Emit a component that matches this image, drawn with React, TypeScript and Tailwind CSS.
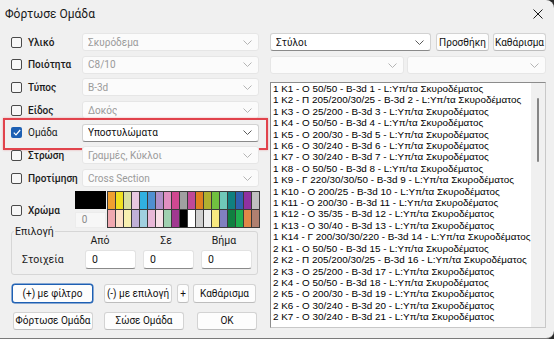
import React from 'react';

const topColors = [
  '#f0a030', '#f0e020', '#d8e0a0', '#e8c8e0', '#30b0e0', '#5090d0', '#b090c8', '#e090c0', '#d04890', '#a0a0a0',
  '#c04898', '#e08020', '#b0b030', '#70c040', '#70c8b8', '#108080', '#3060b0', '#9030a0', '#c0c0c0',
];
const bottomColors = [
  '#f0a8b0', '#fde0c8', '#f8f0b0', '#c0b0d8', '#a0d0e0', '#e8b8d8', '#f8e0e8', '#a0d0b0', '#a03890', '#000000',
  '#ffffff', '#d0d0d0', '#f0f0f0', '#f8e880', '#8080c0', '#108040', '#20b050', '#e08848', '#b08070',
];

const items = [
  '1 K1 - O 50/50 - B-3d 1 - L:Υπ/τα Σκυροδέματος',
  '1 K2 - Π 205/200/30/25 - B-3d 2 - L:Υπ/τα Σκυροδέματος',
  '1 K3 - O 25/200 - B-3d 3 - L:Υπ/τα Σκυροδέματος',
  '1 K4 - O 50/50 - B-3d 4 - L:Υπ/τα Σκυροδέματος',
  '1 K5 - O 200/30 - B-3d 5 - L:Υπ/τα Σκυροδέματος',
  '1 K6 - O 30/240 - B-3d 6 - L:Υπ/τα Σκυροδέματος',
  '1 K7 - O 30/240 - B-3d 7 - L:Υπ/τα Σκυροδέματος',
  '1 K8 - O 50/50 - B-3d 8 - L:Υπ/τα Σκυροδέματος',
  '1 K9 - Γ 220/30/30/50 - B-3d 9 - L:Υπ/τα Σκυροδέματος',
  '1 K10 - O 200/25 - B-3d 10 - L:Υπ/τα Σκυροδέματος',
  '1 K11 - O 200/30 - B-3d 11 - L:Υπ/τα Σκυροδέματος',
  '1 K12 - O 35/35 - B-3d 12 - L:Υπ/τα Σκυροδέματος',
  '1 K13 - O 30/40 - B-3d 13 - L:Υπ/τα Σκυροδέματος',
  '1 K14 - Γ 200/30/30/220 - B-3d 14 - L:Υπ/τα Σκυροδέματος',
  '2 K1 - O 50/50 - B-3d 15 - L:Υπ/τα Σκυροδέματος',
  '2 K2 - Π 205/200/30/25 - B-3d 16 - L:Υπ/τα Σκυροδέματος',
  '2 K3 - O 25/200 - B-3d 17 - L:Υπ/τα Σκυροδέματος',
  '2 K4 - O 50/50 - B-3d 18 - L:Υπ/τα Σκυροδέματος',
  '2 K5 - O 200/30 - B-3d 19 - L:Υπ/τα Σκυροδέματος',
  '2 K6 - O 30/240 - B-3d 20 - L:Υπ/τα Σκυροδέματος',
  '2 K7 - O 30/240 - B-3d 21 - L:Υπ/τα Σκυροδέματος',
];

const Chevron = ({ dark }: { dark?: boolean }) => (
  <svg width="9" height="5" viewBox="0 0 9 5" fill="none">
    <path d="M0.5 0.5 L4.5 4.5 L8.5 0.5" stroke={dark ? '#5a5a5a' : '#b4b4b4'} strokeWidth="1" />
  </svg>
);

const CheckBox = ({ checked }: { checked?: boolean }) =>
  checked ? (
    <div className="w-[11px] h-[11px] rounded-[2px] bg-[#1d5fb3] flex items-center justify-center">
      <svg width="8" height="7" viewBox="0 0 8 7" fill="none">
        <path d="M0.8 3.6 L3 5.8 L7.2 1" stroke="#ffffff" strokeWidth="1.2" />
      </svg>
    </div>
  ) : (
    <div className="w-[11px] h-[11px] rounded-[2px] border border-[#4a4a4a] bg-[#f7f7f7]" />
  );

interface SelectProps {
  value?: string;
  active?: boolean;
  className: string;
}

const Select: React.FC<SelectProps> = ({ value, active, className }) => (
  <div
    className={`h-[18px] flex items-center justify-between rounded-[3px] border pl-[5px] pr-[6px] text-[10px] ${
      active
        ? 'bg-white border-[#d2d2d2] border-b-[#8a8a8a] text-[#111111]'
        : 'bg-[#fbfbfb] border-[#e6e6e6] text-[#9a9a9a]'
    } ${className}`}
  >
    <span className="truncate">{value}</span>
    <Chevron dark={active} />
  </div>
);

const Btn = ({ label, className, focused }: { label: string; className: string; focused?: boolean }) => (
  <button
    className={`flex items-center justify-center whitespace-nowrap rounded-[3px] border bg-[#fdfdfd] text-[10px] text-[#111111] ${
      focused ? 'border-[#1d5fb3] shadow-[0_0_0_0.5px_#1d5fb3]' : 'border-[#d3d3d3] border-b-[#bdbdbd]'
    } ${className}`}
  >
    {label}
  </button>
);

const NumInput = () => (
  <div className="w-[51px] h-[19px] flex items-center pl-[6px] rounded-[3px] border border-[#e2e2e2] border-b-[#8a8a8a] bg-white text-[10.5px] text-[#111111]">
    0
  </div>
);

const rows: { label: string; value: string; checked?: boolean }[] = [
  { label: 'Υλικό', value: 'Σκυρόδεμα' },
  { label: 'Ποιότητα', value: 'C8/10' },
  { label: 'Τύπος', value: 'B-3d' },
  { label: 'Είδος', value: 'Δοκός' },
  { label: 'Ομάδα', value: 'Υποστυλώματα', checked: true },
  { label: 'Στρώση', value: 'Γραμμές, Κύκλοι' },
  { label: 'Προτίμηση', value: 'Cross Section' },
];

export default function App() {
  return (
    <div className="w-[554px] h-[339px] bg-[#2a2a2a] overflow-hidden" style={{ fontFamily: 'Roboto, "Noto Sans", sans-serif' }}>
      <div className="w-full h-full bg-[#f0f0f0] rounded-tr-[8px] rounded-br-[8px] border-b border-[#7a7a7a] flex flex-col">
        {/* Title bar */}
        <div className="h-[28px] flex items-center justify-between pl-[5px] pr-[11px]">
          <span className="text-[12px] text-[#1a1a1a]">Φόρτωσε Ομάδα</span>
          <svg width="10" height="10" viewBox="0 0 10 10" fill="none">
            <path d="M0.5 0.5 L9.5 9.5 M9.5 0.5 L0.5 9.5" stroke="#1a1a1a" strokeWidth="1" />
          </svg>
        </div>

        <div className="flex pl-[10px] pt-[5px]">
          {/* Left column */}
          <div className="w-[250px] flex flex-col">
            <div className="flex flex-col gap-[4.7px]">
              {rows.map((r) => (
                <div key={r.label} className="relative h-[18px] flex items-center">
                  {r.checked && (
                    <div className="absolute left-[-7px] top-[-6px] w-[265px] h-[32px] border-2 border-[#e1434c] shadow-[0_0_2px_rgba(225,67,76,0.4)]" />
                  )}
                  <div className="w-[72px] flex items-center pl-[1px]">
                    <CheckBox checked={r.checked} />
                    <span className={`ml-[6px] text-[10px] text-[#1a1a1a] ${r.checked ? '' : 'font-medium'}`}>{r.label}</span>
                  </div>
                  <Select value={r.value} active={r.checked} className="w-[177px]" />
                </div>
              ))}
            </div>

            {/* Colour */}
            <div className="mt-[3.8px] h-[37px] flex">
              <div className="w-[66px] flex items-center pl-[1px] pt-[2px]">
                <CheckBox />
                <span className="ml-[6px] text-[10px] font-medium text-[#1a1a1a]">Χρώμα</span>
              </div>
              <div className="w-[32px] flex flex-col">
                <div className="h-[18px] bg-black" />
                <div className="mt-[3px] h-[16px] bg-[#f7f7f7] border border-[#ececec] flex items-center pl-[6px] text-[10px] text-[#8a8a8a]">
                  0
                </div>
              </div>
              <div className="ml-[1px] w-[153px] h-[37px] bg-[#3a3a3a] p-[1px] grid grid-cols-[repeat(19,7px)] grid-rows-[17px_17px] gap-[1px]">
                {[...topColors, ...bottomColors].map((c, i) => (
                  <div key={i} style={{ background: c }} />
                ))}
              </div>
            </div>

            {/* Selection group */}
            <fieldset className="ml-[1px] w-[247px] border border-[#d6d6d6] rounded-[3px] pb-[5px]">
              <legend className="ml-[2px] px-[1px] text-[10.5px] leading-[8px] text-[#1a1a1a]">Επιλογή</legend>
              <div className="h-[10px] flex items-center text-[10.5px] text-[#1a1a1a]">
                <div className="w-[72px]" />
                <span className="w-[32px] text-center">Από</span>
                <span className="ml-[34px] w-[32px] text-center">Σε</span>
                <span className="ml-[26px] w-[32px] text-center">Βήμα</span>
              </div>
              <div className="mt-[4px] flex items-center">
                <span className="w-[73px] pl-[10px] text-[10.5px] text-[#1a1a1a]">Στοιχεία</span>
                <div className="flex gap-[7px]">
                  <NumInput />
                  <NumInput />
                  <NumInput />
                </div>
              </div>
            </fieldset>

            <div className="mt-[9px] flex items-center">
              <Btn label="(+) με φίλτρο" focused className="ml-[2px] w-[81px] h-[19px]" />
              <Btn label="(-) με επιλογή" className="ml-[11px] w-[68px] h-[19px]" />
              <Btn label="+" className="ml-[5px] w-[12px] h-[19px]" />
              <Btn label="Καθάρισμα" className="ml-[4px] w-[63px] h-[19px]" />
            </div>
            <div className="mt-[9px] flex items-center">
              <Btn label="Φόρτωσε Ομάδα" className="ml-[3px] w-[80px] h-[18px]" />
              <Btn label="Σώσε Ομάδα" className="ml-[11px] w-[80px] h-[18px]" />
              <Btn label="OK" className="ml-[13px] w-[60px] h-[18px]" />
            </div>
          </div>

          {/* Right column */}
          <div className="ml-[10px] w-[276px] flex flex-col">
            <div className="flex items-center">
              <Select value="Στύλοι" active className="w-[161px]" />
              <Btn label="Προσθήκη" className="ml-[5px] w-[53px] h-[18px]" />
              <Btn label="Καθάρισμα" className="ml-[4px] w-[53px] h-[18px]" />
            </div>
            <div className="mt-[5px] flex items-center">
              <Select className="w-[134px]" />
              <Select className="ml-[3px] w-[139px]" />
            </div>
            <div className="mt-[8px] h-[246px] flex bg-white border border-[#8c8c8c] border-r-[#c8c8c8] border-b-[#c8c8c8] overflow-hidden">
              <div
                className="flex-1 min-w-0 pl-[2px] text-[9.9px] leading-[11.4px] text-black overflow-hidden"
                style={{ fontFamily: '"Liberation Sans", Arial, sans-serif' }}
              >
                {items.map((t) => (
                  <div key={t} className="whitespace-nowrap">
                    {t}
                  </div>
                ))}
              </div>
              <div className="w-[14px] shrink-0 bg-[#f0f0f0] flex justify-center">
                <div className="mt-[15px] w-[2px] h-[64px] rounded-full bg-[#868686]" />
              </div>
            </div>
          </div>
        </div>
      </div>
    </div>
  );
}
